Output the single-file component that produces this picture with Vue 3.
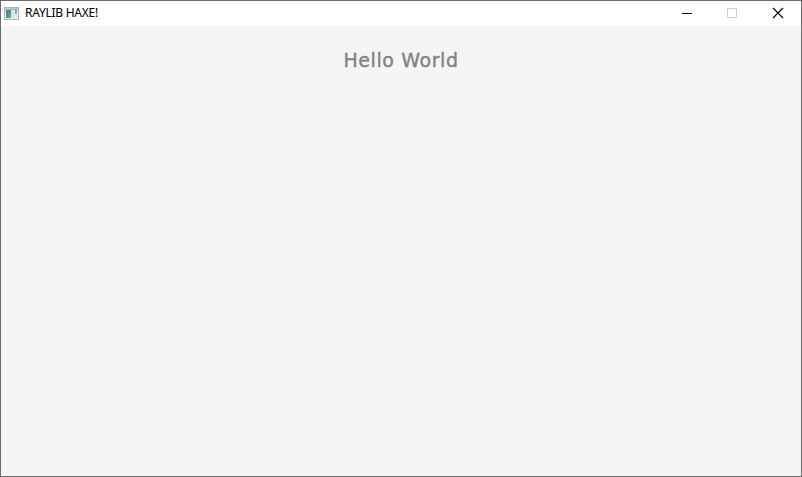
<script setup>
const title = 'RAYLIB HAXE!'
</script>

<template>
  <div class="window">
    <header class="titlebar">
      <svg class="app-icon" width="15" height="13" viewBox="0 0 15 13" shape-rendering="crispEdges">
        <defs>
          <linearGradient id="pane" x1="0" y1="0" x2="1" y2="1">
            <stop offset="0" stop-color="#4779a5" />
            <stop offset="1" stop-color="#60b778" />
          </linearGradient>
        </defs>
        <rect width="15" height="13" fill="#afb2b3" />
        <rect x="1" y="1" width="13" height="1" fill="#c5c8ca" />
        <rect x="1" y="3" width="13" height="9" fill="#eef1f3" />
        <rect x="2" y="3" width="5" height="8" fill="url(#pane)" />
        <rect x="7" y="3" width="3" height="8" fill="#d5e3e5" />
        <rect x="11" y="3" width="2" height="4" fill="url(#pane)" opacity=".75" />
        <rect x="11" y="7" width="2" height="4" fill="#dce5e3" />
      </svg>
      <span class="title">{{ title }}</span>
      <div class="controls">
        <svg width="46" height="25" viewBox="0 0 46 25"><path d="M12 12.5h10" stroke="#000" /></svg>
        <svg width="46" height="25" viewBox="0 0 46 25"><path d="M11.5 7.5h9v9h-9z" fill="none" stroke="#ccc" /></svg>
        <svg width="40" height="25" viewBox="0 0 40 25"><path d="M11 7l10 10M21 7l-10 10" stroke="#000" stroke-width="1.1" /></svg>
      </div>
    </header>
    <main class="canvas"><span class="hello">Hello World</span></main>
  </div>
</template>

<style>
body { background: #fff; overflow: hidden; }
</style>

<style scoped>
.window {
  box-sizing: border-box;
  width: 802px;
  height: 477px;
  border: 1px solid #6c6c6c;
  display: flex;
  flex-direction: column;
  background: #f5f5f5;
}
.titlebar {
  height: 25px;
  flex: none;
  display: flex;
  align-items: center;
  background: #fff;
  padding-left: 3px;
}
.app-icon { flex: none; margin-right: 6px; }
.title {
  font: 12px/16px "Noto Sans", "Open Sans", sans-serif;
  letter-spacing: -0.25px;
  color: #000;
  white-space: nowrap;
  margin-top: -1px;
}
.controls { display: flex; margin-left: auto; margin-right: -1px; }
.controls svg { display: block; }
.canvas {
  flex: 1;
  display: flex;
  justify-content: center;
  align-items: flex-start;
  padding-top: 23px;
}
.hello {
  font: 19px/22px "DejaVu Sans", sans-serif;
  letter-spacing: 0.6px;
  color: #828282;
  -webkit-text-stroke: 0.4px #828282;
  white-space: nowrap;
}
</style>
